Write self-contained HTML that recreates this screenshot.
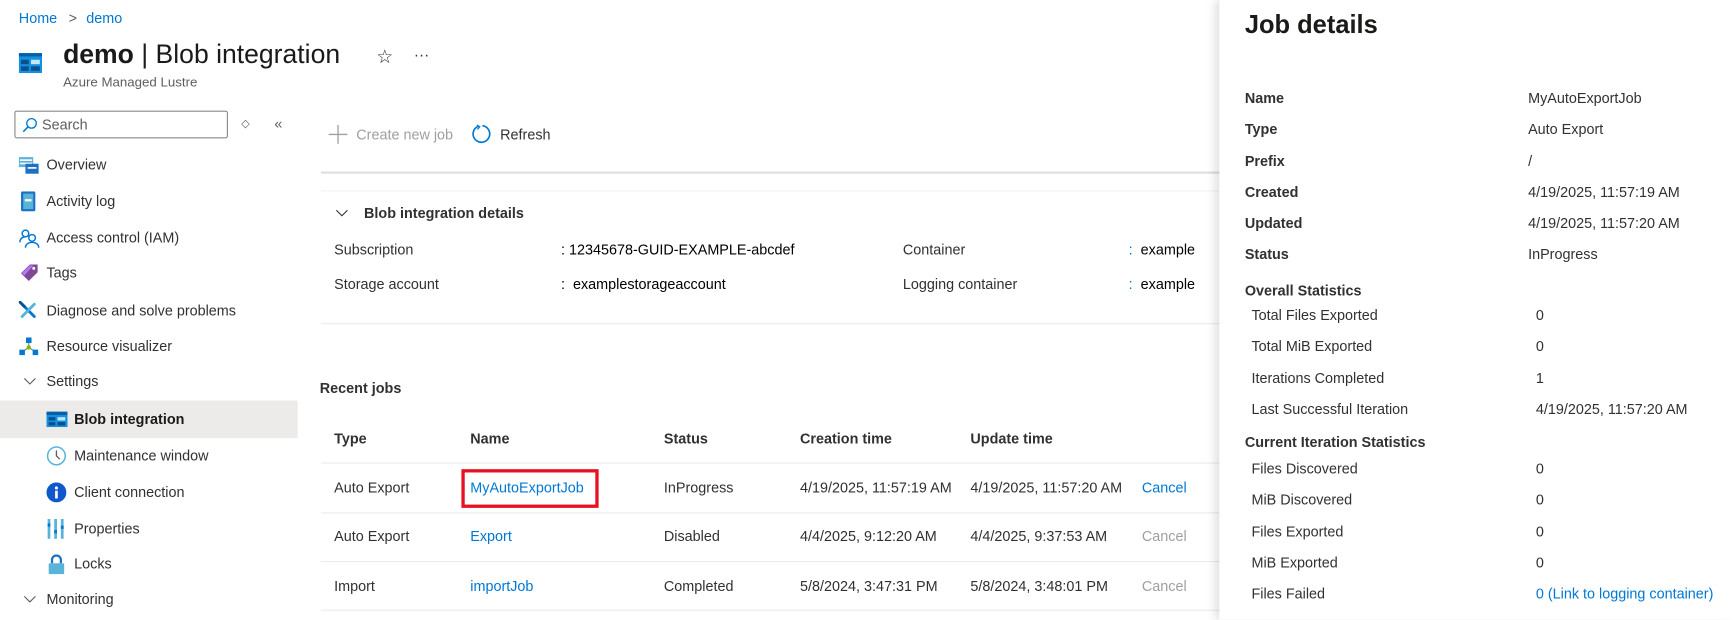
<!DOCTYPE html>
<html><head><meta charset="utf-8"><style>
*{margin:0;padding:0;box-sizing:border-box}
html,body{width:1735px;height:619px;overflow:hidden;background:#fff}
#w{position:absolute;left:0;top:0;width:1568px;height:560px;transform:scale(1.10651);transform-origin:0 0;font-family:"Liberation Sans",sans-serif;font-size:13px;color:#323130}
.t{position:absolute;line-height:16px;white-space:nowrap}
.b{font-weight:bold}
.blue{color:#0078d4}
.line{position:absolute;height:1px;background:#edebe9}
.ic{position:absolute}
</style></head><body><div id="w">

<div class="t blue" style="left:17px;top:9px">Home</div>
<div class="t" style="left:62px;top:9px;color:#605e5c">&gt;</div>
<div class="t blue" style="left:78px;top:9px">demo</div>

<svg class="ic" style="left:17px;top:44px" width="21" height="26" viewBox="0 0 21 26"><rect x="0" y="4" width="21" height="18" fill="#1490df"/><rect x="0" y="4" width="21" height="3" fill="#0a5ea8"/><rect x="2" y="10" width="7" height="4" fill="#0a4f8f"/><rect x="11" y="10" width="8" height="4" fill="#c3e6fb"/><rect x="2" y="16" width="7" height="4" fill="#0a4f8f"/><rect x="11" y="16" width="8" height="4" fill="#0a4f8f"/></svg>
<div class="t" style="left:57px;top:35px;font-size:24px;line-height:30px;color:#1b1a19"><b>demo</b> | Blob integration</div>
<div class="t" style="left:340px;top:41px;font-size:17px;line-height:22px">☆</div>
<div class="t" style="left:374px;top:41px;font-size:14px">···</div>
<div class="t" style="left:57px;top:66px;font-size:12px;color:#605e5c">Azure Managed Lustre</div>

<div style="position:absolute;left:13px;top:100px;width:193px;height:25px;border:1px solid #8a8886;border-radius:2px"></div>
<svg class="ic" style="left:20px;top:106px" width="14" height="14" viewBox="0 0 14 14"><circle cx="8.5" cy="5.5" r="4.3" fill="none" stroke="#0078d4" stroke-width="1.2"/><path d="M5.5 8.5 L1 13" stroke="#0078d4" stroke-width="1.4"/></svg>
<div class="t" style="left:38px;top:105px;color:#605e5c">Search</div>
<div class="t" style="left:218px;top:105px;font-size:10px;color:#605e5c">◇</div>
<div class="t" style="left:248px;top:104px;color:#605e5c">«</div>

<svg class="ic" style="left:17px;top:141px" width="18" height="17"><rect x="0" y="1" width="13" height="9" fill="#59b4d9"/><rect x="1" y="3" width="11" height="1.5" fill="#fff"/><rect x="1" y="6" width="11" height="1.5" fill="#fff"/><rect x="6" y="7" width="12" height="9" fill="#1e70c2"/><rect x="8" y="10" width="8" height="1.5" fill="#fff"/></svg>
<div class="t" style="left:42px;top:141px">Overview</div>
<svg class="ic" style="left:19px;top:173px" width="13" height="18"><rect x="0" y="0" width="13" height="18" rx="1.5" fill="#1e70c2"/><rect x="2" y="2" width="9" height="14" fill="#59b4d9"/><rect x="3.5" y="7" width="6" height="2" fill="#fff"/></svg>
<div class="t" style="left:42px;top:174px">Activity log</div>
<svg class="ic" style="left:17px;top:206px" width="20" height="18" fill="none" stroke="#0078d4" stroke-width="1.3"><circle cx="6" cy="5" r="3"/><path d="M1 13c0-3 2-5 5-5"/><circle cx="12" cy="9" r="3"/><path d="M6 18c0-3 2.5-5 6-5s6 2 6 5"/></svg>
<div class="t" style="left:42px;top:207px">Access control (IAM)</div>
<svg class="ic" style="left:18px;top:238px" width="17" height="17"><path d="M1 9 L9 1 L16 1 L16 8 L8 16 Z" fill="#804998"/><path d="M2 9 L9 2 L12 2 L4 11Z" fill="#b77af4"/><circle cx="12.5" cy="4.5" r="1.3" fill="#fff"/></svg>
<div class="t" style="left:42px;top:239px">Tags</div>
<svg class="ic" style="left:17px;top:272px" width="17" height="17" stroke-width="2.6" stroke-linecap="round"><path d="M3 3 L14 14" stroke="#0078d4"/><path d="M14 3 L3 14" stroke="#59b4d9"/><path d="M1 1 L5 5" stroke="#0a4f8f"/></svg>
<div class="t" style="left:42px;top:273px">Diagnose and solve problems</div>
<svg class="ic" style="left:17px;top:304px" width="18" height="17"><path d="M9 4 V10 M9 10 L3 14 M9 10 L15 14" stroke="#7a7a7a" stroke-width="1"/><rect x="6.5" y="1" width="5" height="5" fill="#0078d4"/><circle cx="9" cy="10" r="2" fill="#7fba00"/><rect x="0.5" y="12" width="5" height="5" fill="#0078d4"/><rect x="12.5" y="12" width="5" height="5" fill="#0078d4"/></svg>
<div class="t" style="left:42px;top:305px">Resource visualizer</div>
<svg class="ic" style="left:21px;top:341px" width="12" height="8" fill="none" stroke="#605e5c"><path d="M1 1 L6 6 L11 1"/></svg>
<div class="t" style="left:42px;top:337px">Settings</div>

<div style="position:absolute;left:0;top:362px;width:269px;height:34px;background:#edebe9"></div>
<svg class="ic" style="left:42px;top:372px" width="19" height="14"><rect width="19" height="14" fill="#1490df"/><rect width="19" height="3" fill="#0a5ea8"/><rect x="2" y="5" width="6" height="3" fill="#0a4f8f"/><rect x="10" y="5" width="7" height="3" fill="#c3e6fb"/><rect x="2" y="9.5" width="6" height="3" fill="#0a4f8f"/><rect x="10" y="9.5" width="7" height="3" fill="#0a4f8f"/></svg>
<div class="t b" style="left:67px;top:371px;color:#1b1a19">Blob integration</div>
<svg class="ic" style="left:42px;top:403px" width="18" height="18" fill="none"><circle cx="9" cy="9" r="8" stroke="#59b4d9" stroke-width="1.4"/><path d="M9 4 V9 L12 12" stroke="#605e5c" stroke-width="1.2"/></svg>
<div class="t" style="left:67px;top:404px">Maintenance window</div>
<svg class="ic" style="left:42px;top:436px" width="18" height="18"><circle cx="9" cy="9" r="9" fill="#0f57cc"/><circle cx="9" cy="5" r="1.4" fill="#fff"/><rect x="7.8" y="7.5" width="2.4" height="7" fill="#fff"/></svg>
<div class="t" style="left:67px;top:437px">Client connection</div>
<svg class="ic" style="left:43px;top:469px" width="16" height="18"><rect x="0" y="0" width="2.5" height="18" fill="#59b4d9"/><rect x="0" y="4" width="2.5" height="3" fill="#0078d4"/><rect x="6" y="0" width="2.5" height="18" fill="#59b4d9"/><rect x="6" y="10" width="2.5" height="3" fill="#0078d4"/><rect x="12" y="0" width="2.5" height="18" fill="#59b4d9"/><rect x="12" y="6" width="2.5" height="3" fill="#0078d4"/></svg>
<div class="t" style="left:67px;top:470px">Properties</div>
<svg class="ic" style="left:43px;top:501px" width="16" height="18"><path d="M4 8 V5 a4 4 0 0 1 8 0 V8" fill="none" stroke="#1e70c2" stroke-width="2"/><rect x="1" y="8" width="14" height="10" rx="1" fill="#59b4d9"/></svg>
<div class="t" style="left:67px;top:502px">Locks</div>
<svg class="ic" style="left:21px;top:538px" width="12" height="8" fill="none" stroke="#605e5c"><path d="M1 1 L6 6 L11 1"/></svg>
<div class="t" style="left:42px;top:534px">Monitoring</div>

<svg class="ic" style="left:297px;top:113px" width="17" height="17" stroke="#a19f9d" stroke-width="1.2"><path d="M8.5 0 V17 M0 8.5 H17"/></svg>
<div class="t" style="left:322px;top:114px;color:#a19f9d">Create new job</div>
<svg class="ic" style="left:426px;top:112px" width="18" height="18" fill="none" stroke="#0078d4" stroke-width="1.5"><path d="M6 2.2 A7.5 7.5 0 1 0 10 1.6"/><path d="M5 1 L7.5 2.5 L5.5 5" stroke-width="1.2"/></svg>
<div class="t" style="left:452px;top:114px">Refresh</div>
<div class="line" style="left:290px;top:155px;width:812px;height:2px;background:#e1dfdd"></div>
<div class="line" style="left:290px;top:172px;width:812px;background:#f3f2f1"></div>

<svg class="ic" style="left:303px;top:189px" width="12" height="8" fill="none" stroke="#323130"><path d="M1 1 L6 6 L11 1"/></svg>
<div class="t b" style="left:329px;top:185px">Blob integration details</div>
<div class="t" style="left:302px;top:218px">Subscription</div>
<div class="t" style="left:507px;top:218px;color:#000">: 12345678-GUID-EXAMPLE-abcdef</div>
<div class="t" style="left:302px;top:249px">Storage account</div>
<div class="t" style="left:507px;top:249px;color:#000">:&nbsp; examplestorageaccount</div>
<div class="t" style="left:816px;top:218px">Container</div>
<div class="t" style="left:1020px;top:218px;color:#000"><span class="blue">:</span>&nbsp; example</div>
<div class="t" style="left:816px;top:249px">Logging container</div>
<div class="t" style="left:1020px;top:249px;color:#000"><span class="blue">:</span>&nbsp; example</div>
<div class="line" style="left:290px;top:292px;width:812px"></div>

<div class="t b" style="left:289px;top:343px">Recent jobs</div>
<div class="t b" style="left:302px;top:389px">Type</div>
<div class="t b" style="left:425px;top:389px">Name</div>
<div class="t b" style="left:600px;top:389px">Status</div>
<div class="t b" style="left:723px;top:389px">Creation time</div>
<div class="t b" style="left:877px;top:389px">Update time</div>
<div class="line" style="left:290px;top:418px;width:812px"></div>

<div class="t" style="left:302px;top:433px">Auto Export</div>
<div style="position:absolute;left:417px;top:424px;width:124px;height:35px;border:3px solid #e81123"></div>
<div class="t blue" style="left:425px;top:433px">MyAutoExportJob</div>
<div class="t" style="left:600px;top:433px">InProgress</div>
<div class="t" style="left:723px;top:433px">4/19/2025, 11:57:19 AM</div>
<div class="t" style="left:877px;top:433px">4/19/2025, 11:57:20 AM</div>
<div class="t blue" style="left:1032px;top:433px">Cancel</div>
<div class="line" style="left:290px;top:463px;width:812px"></div>

<div class="t" style="left:302px;top:477px">Auto Export</div>
<div class="t blue" style="left:425px;top:477px">Export</div>
<div class="t" style="left:600px;top:477px">Disabled</div>
<div class="t" style="left:723px;top:477px">4/4/2025, 9:12:20 AM</div>
<div class="t" style="left:877px;top:477px">4/4/2025, 9:37:53 AM</div>
<div class="t" style="left:1032px;top:477px;color:#a19f9d">Cancel</div>
<div class="line" style="left:290px;top:507px;width:812px"></div>

<div class="t" style="left:302px;top:522px">Import</div>
<div class="t blue" style="left:425px;top:522px">importJob</div>
<div class="t" style="left:600px;top:522px">Completed</div>
<div class="t" style="left:723px;top:522px">5/8/2024, 3:47:31 PM</div>
<div class="t" style="left:877px;top:522px">5/8/2024, 3:48:01 PM</div>
<div class="t" style="left:1032px;top:522px;color:#a19f9d">Cancel</div>
<div class="line" style="left:290px;top:551px;width:812px"></div>

<div style="position:absolute;left:1102px;top:0;width:466px;height:560px;background:#fff;box-shadow:-4px 0 8px rgba(0,0,0,0.12)"></div>
<div class="t b" style="left:1125px;top:7px;font-size:23px;line-height:30px;color:#1b1a19">Job details</div>
<div class="t b" style="left:1125px;top:81px">Name</div><div class="t" style="left:1381px;top:81px">MyAutoExportJob</div>
<div class="t b" style="left:1125px;top:109px">Type</div><div class="t" style="left:1381px;top:109px">Auto Export</div>
<div class="t b" style="left:1125px;top:138px">Prefix</div><div class="t" style="left:1381px;top:138px">/</div>
<div class="t b" style="left:1125px;top:166px">Created</div><div class="t" style="left:1381px;top:166px">4/19/2025, 11:57:19 AM</div>
<div class="t b" style="left:1125px;top:194px">Updated</div><div class="t" style="left:1381px;top:194px">4/19/2025, 11:57:20 AM</div>
<div class="t b" style="left:1125px;top:222px">Status</div><div class="t" style="left:1381px;top:222px">InProgress</div>
<div class="t b" style="left:1125px;top:255px">Overall Statistics</div>
<div class="t" style="left:1131px;top:277px">Total Files Exported</div><div class="t" style="left:1388px;top:277px">0</div>
<div class="t" style="left:1131px;top:305px">Total MiB Exported</div><div class="t" style="left:1388px;top:305px">0</div>
<div class="t" style="left:1131px;top:334px">Iterations Completed</div><div class="t" style="left:1388px;top:334px">1</div>
<div class="t" style="left:1131px;top:362px">Last Successful Iteration</div><div class="t" style="left:1388px;top:362px">4/19/2025, 11:57:20 AM</div>
<div class="t b" style="left:1125px;top:392px">Current Iteration Statistics</div>
<div class="t" style="left:1131px;top:416px">Files Discovered</div><div class="t" style="left:1388px;top:416px">0</div>
<div class="t" style="left:1131px;top:444px">MiB Discovered</div><div class="t" style="left:1388px;top:444px">0</div>
<div class="t" style="left:1131px;top:473px">Files Exported</div><div class="t" style="left:1388px;top:473px">0</div>
<div class="t" style="left:1131px;top:501px">MiB Exported</div><div class="t" style="left:1388px;top:501px">0</div>
<div class="t" style="left:1131px;top:529px">Files Failed</div><div class="t blue" style="left:1388px;top:529px">0 (Link to logging container)</div>
</div></body></html>
